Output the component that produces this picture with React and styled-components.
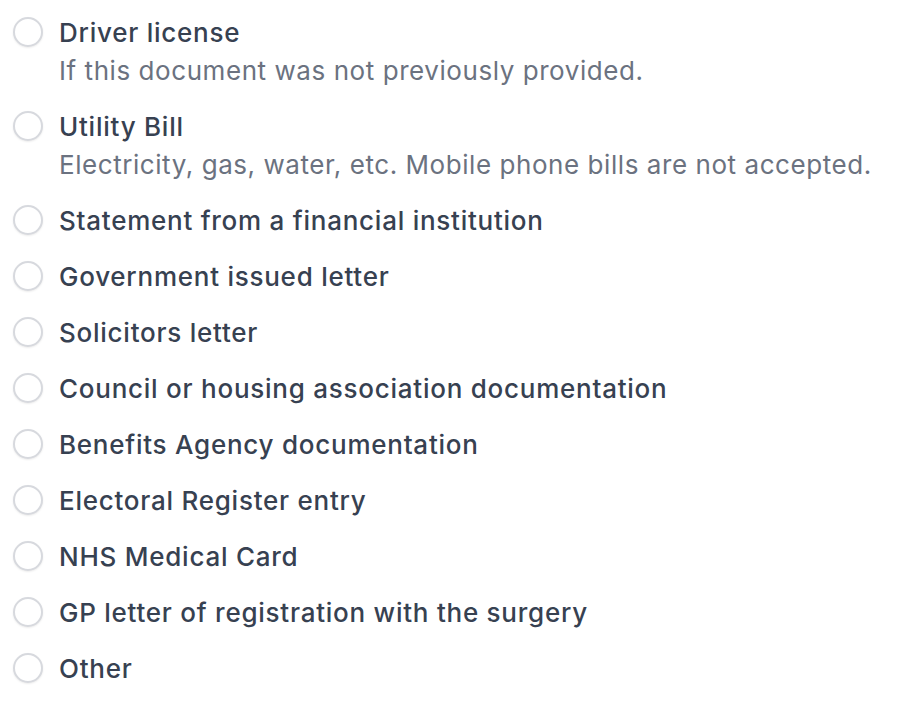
import React from "react";
import styled, { createGlobalStyle } from "styled-components";

const GlobalStyle = createGlobalStyle`
  body {
    margin: 0;
    background: #ffffff;
    font-family: Inter, "Noto Sans", "Liberation Sans", sans-serif;
    -webkit-font-smoothing: antialiased;
  }
`;

const List = styled.fieldset`
  border: none;
  margin: 0;
  padding: 13px 0 0 13px;
  display: flex;
  flex-direction: column;
  gap: 17px;
`;

const Row = styled.label`
  display: flex;
  align-items: flex-start;
  gap: 16px;
  cursor: pointer;
`;

const Radio = styled.input.attrs({ type: "radio" })`
  appearance: none;
  flex: none;
  width: 30px;
  height: 30px;
  margin: 4px 0 0 0;
  border-radius: 50%;
  border: 2px solid #d7d9de;
  background: #fff;
  box-shadow: 0 1px 2px rgba(0, 0, 0, 0.08);
  cursor: pointer;
`;

const Text = styled.div`
  display: flex;
  flex-direction: column;
`;

const Title = styled.span`
  font-size: 26px;
  line-height: 39px;
  font-weight: 500;
  letter-spacing: 0.75px;
  color: #374151;
`;

const Hint = styled.span`
  font-size: 26px;
  line-height: 38px;
  letter-spacing: 0.56px;
  color: #6b7280;
`;

const options = [
  { title: "Driver license", hint: "If this document was not previously provided." },
  { title: "Utility Bill", hint: "Electricity, gas, water, etc. Mobile phone bills are not accepted." },
  { title: "Statement from a financial institution" },
  { title: "Government issued letter" },
  { title: "Solicitors letter" },
  { title: "Council or housing association documentation" },
  { title: "Benefits Agency documentation" },
  { title: "Electoral Register entry" },
  { title: "NHS Medical Card" },
  { title: "GP letter of registration with the surgery" },
  { title: "Other" },
];

export default function App() {
  return (
    <>
      <GlobalStyle />
      <List>
        {options.map((o) => (
          <Row key={o.title}>
            <Radio name="document" />
            <Text>
              <Title>{o.title}</Title>
              {o.hint && <Hint>{o.hint}</Hint>}
            </Text>
          </Row>
        ))}
      </List>
    </>
  );
}
